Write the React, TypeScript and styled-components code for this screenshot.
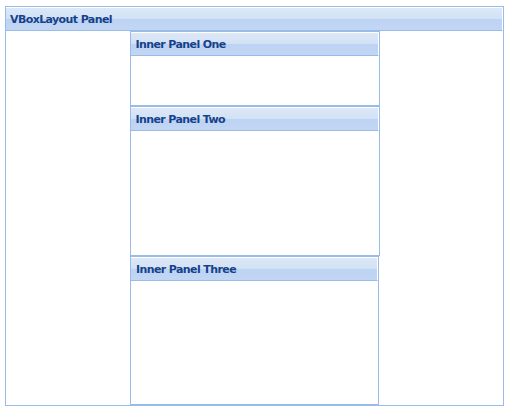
import React from "react";
import styled, { createGlobalStyle } from "styled-components";

const GlobalStyle = createGlobalStyle`
  html, body {
    margin: 0;
    padding: 0;
    background: #fff;
  }
  body {
    font-family: "DejaVu Sans", Verdana, sans-serif;
  }
`;

const Page = styled.div`
  padding: 6px 0 0 5px;
`;

const Panel = styled.div<{ $w: number; $h: number }>`
  box-sizing: border-box;
  width: ${(p) => p.$w}px;
  height: ${(p) => p.$h}px;
  border: 1px solid #99bbe8;
  display: flex;
  flex-direction: column;
  background: #fff;
`;

const Header = styled.div<{ $indent: number }>`
  box-sizing: border-box;
  height: 24px;
  flex: none;
  display: flex;
  align-items: center;
  padding-left: ${(p) => p.$indent}px;
  padding-top: 1px;
  border-top: 1px solid #fff;
  border-right: 1px solid #fff;
  border-bottom: 1px solid #99bbe8;
  background: linear-gradient(
    to bottom,
    #dde8f7 0%,
    #d2e1f5 48%,
    #bdd3f3 52%,
    #c2d6f4 100%
  );
  color: #15428b;
  font-size: 11px;
  font-weight: bold;
  letter-spacing: -0.6px;
  white-space: nowrap;
`;

const Body = styled.div`
  flex: 1;
  display: flex;
  flex-direction: column;
  align-items: center;
`;

const inner = [
  { title: "Inner Panel One", w: 250, h: 75 },
  { title: "Inner Panel Two", w: 250, h: 150 },
  { title: "Inner Panel Three", w: 249, h: 149 },
];

export default function App() {
  return (
    <>
      <GlobalStyle />
      <Page>
        <Panel $w={499} $h={400}>
          <Header $indent={4}>VBoxLayout Panel</Header>
          <Body>
            {inner.map((p) => (
              <Panel key={p.title} $w={p.w} $h={p.h}>
                <Header $indent={5}>{p.title}</Header>
              </Panel>
            ))}
          </Body>
        </Panel>
      </Page>
    </>
  );
}
